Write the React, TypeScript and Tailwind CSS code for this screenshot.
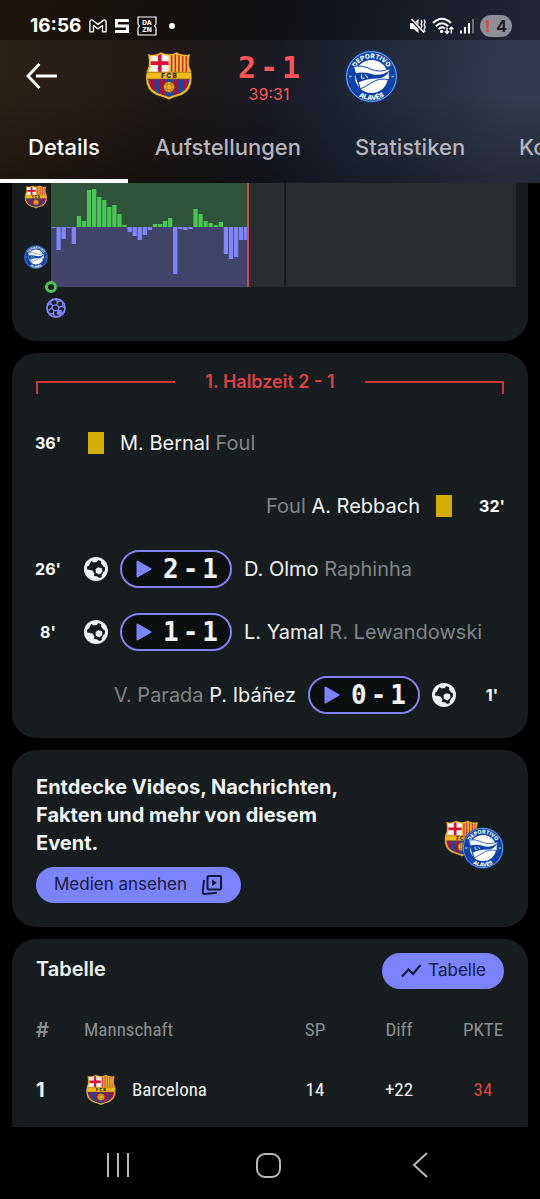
import { useId } from "react";

const momentum = [
  -1, -23, -12, -1, -17, 11, 6, 37, 38, 30, 27, 20, 22, 13, 2, -5, -9, -13, -8, -3,
  3, 3, 6, 9, -47, -2, -3, -2, 18, 13, 6, 4, 2, 5, -27, -32, -30, -13, -13,
];

const tabs = ["Details", "Aufstellungen", "Statistiken", "Kommentare"];

type MatchEvent = {
  minute: string;
  side: "home" | "away";
  player: string;
  detail: string;
  score?: [number, number];
};

const events: MatchEvent[] = [
  { minute: "36'", side: "home", player: "M. Bernal", detail: "Foul" },
  { minute: "32'", side: "away", player: "A. Rebbach", detail: "Foul" },
  { minute: "26'", side: "home", player: "D. Olmo", detail: "Raphinha", score: [2, 1] },
  { minute: "8'", side: "home", player: "L. Yamal", detail: "R. Lewandowski", score: [1, 1] },
  { minute: "1'", side: "away", player: "P. Ibáñez", detail: "V. Parada", score: [0, 1] },
];

function BarcaCrest({ className }: { className: string }) {
  const id = useId();
  const shape =
    "M8 8Q28 15 48 3Q72 15 95 3Q116 15 136 8Q131 30 133 46Q142 60 141 80Q141 118 110 133Q84 140 72 147Q59 140 34 133Q2 118 2 80Q2 60 10 46Q13 30 8 8Z";
  return (
    <svg className={className} viewBox="0 0 144 150" role="img" aria-label="Barcelona">
      <clipPath id={id}>
        <path d="M16 15Q32 18 49 9Q72 20 94 9Q112 18 128 15Q124 34 126 48Q135 62 134 80Q133 112 107 126Q82 133 72 139Q61 133 37 126Q10 112 9 80Q9 62 17 48Q20 34 16 15Z" />
      </clipPath>
      <path d={shape} fill="#f2b91b" stroke="#1d1a3a" strokeWidth="2" />
      <g clipPath={`url(#${id})`}>
        <path d="M0 0H71V62H0Z" fill="#fbf7f2" />
        <path d="M39 0H50V62H39ZM0 31H71V42H0Z" fill="#dc1038" />
        <path d="M74 0H144V62H74Z" fill="#f9cf33" />
        <path d="M80 0V62M91 0V62M102 0V62M113 0V62M124 0V62" stroke="#cf2238" strokeWidth="5" />
        <path d="M0 84H144V150H0Z" fill="#17489c" />
        <path d="M14 84H30V150H14ZM44 84H60V150H44ZM84 84H100V150H84ZM114 84H130V150H114Z" fill="#a5123f" />
      </g>
      <path d="M6 64H138M6 84H138" stroke="#8a5b10" strokeWidth="2" />
      <text x="72" y="81" textAnchor="middle" fontSize="19" fontWeight="800" fontFamily="Inter, sans-serif" fill="#1d1a16">
        F C B
      </text>
      <circle cx="72" cy="108" r="16" fill="#efb71e" stroke="#8a5b10" strokeWidth="2" />
      <path d="M60 102Q72 96 84 103M60 113Q72 120 84 112M68 93Q62 107 69 123M77 93Q83 108 77 123" stroke="#966411" strokeWidth="2" fill="none" />
    </svg>
  );
}

function AlavesCrest({ className }: { className: string }) {
  const id = useId();
  return (
    <svg className={className} viewBox="0 0 160 160" role="img" aria-label="Deportivo Alavés">
      <defs>
        <path id={`${id}t`} d="M25 80A55 55 0 0 1 135 80" />
        <path id={`${id}b`} d="M9 80A71 71 0 0 0 151 80" />
      </defs>
      <circle cx="80" cy="80" r="79" fill="#0d43a8" />
      <circle cx="80" cy="80" r="75" fill="none" stroke="#c9d8f4" strokeWidth="2" />
      <circle cx="80" cy="80" r="50" fill="#fff" />
      <g fill="#fff" fontSize="20" fontWeight="800" fontFamily="Inter, sans-serif" textAnchor="middle">
        <text>
          <textPath href={`#${id}t`} startOffset="50%">DEPORTIVO</textPath>
        </text>
        <text>
          <textPath href={`#${id}b`} startOffset="50%">ALAVÉS</textPath>
        </text>
      </g>
      <path d="M24 50Q50 44 78 58Q106 70 136 56Q132 72 134 90Q104 82 78 100Q62 110 46 118Z" fill="#fff" stroke="#0d43a8" strokeWidth="3" strokeLinejoin="round" />
      <path d="M31 70Q58 64 84 73Q110 80 136 60Q122 86 98 86Q66 86 40 98Z" fill="#0d43a8" />
      <path d="M25 48L47 124" stroke="#0d43a8" strokeWidth="3" />
      <path d="M50 74V85H59M61 74L69 85" stroke="#fff" strokeWidth="3" fill="none" />
      <path d="M12 80H20M140 80H148" stroke="#9db6e6" strokeWidth="5" />
    </svg>
  );
}

function GoalBall() {
  return (
    <svg className="size-6 shrink-0" viewBox="0 0 24 24" aria-hidden="true">
      <circle cx="12" cy="12" r="12" fill="#eef3f5" />
      <path
        d="M6.2 6L7.6 4L9.4 5.6L12.8 5L14.4 3L17.4 4.4L17 6.6L19.4 9.4L21 10.4L20.8 14L19.4 15L17.6 18.6L18 20L15 21L13.4 19.4L9.6 18.8L7.4 20.2L5.4 18.6L6.4 16.4L5 13.4L3 12.6L3.2 9.6L5 8.6Z"
        fill="#171c1e"
      />
      <path d="M2 12.6L5.2 12.8L8.6 13.4L10.4 16.4L9.6 19.8L6.4 21L3 17.6Z" fill="#eef3f5" />
      <path d="M14.2 10.2L18 11.2L18.4 14.8L15.4 17.4L11.8 15.8L11.6 12Z" fill="#eef3f5" />
    </svg>
  );
}

function TimelineBall() {
  return (
    <svg className="size-5" viewBox="0 0 24 24" aria-hidden="true">
      <circle cx="12" cy="12" r="10.8" fill="#171c1e" stroke="#8087ff" strokeWidth="2.2" />
      <path d="M8.3 9.2L12.6 8L15.8 11L14.2 15L9.6 15.2L7 12.2Z" fill="none" stroke="#8087ff" strokeWidth="1.6" />
      <path
        d="M8.3 9.2L5.5 6.8L6.3 3M5.5 6.8L1.6 9M12.6 8L14 4.6L10.8 1.6M14 4.6L18.6 3.4M15.8 11L19.8 9.8L22.4 12M19.8 9.8L20 5.6M7 12.2L3.2 14.8M9.6 15.2L8.5 19L4 18.6M8.5 19L11 22.4"
        fill="none"
        stroke="#8087ff"
        strokeWidth="1.6"
      />
      <path d="M13.8 14.8L18.3 14.2L20.4 17.5L16.5 21.2L12.6 19Z" fill="#8087ff" />
    </svg>
  );
}

function StatusBar() {
  return (
    <div className="flex h-10 items-center justify-between bg-black/35 pt-3 pr-7 pl-[30px]">
      <div className="flex items-center gap-2 text-white">
        <span className="text-[19px] leading-6 font-bold">16:56</span>
        <svg className="h-4 w-[18px]" viewBox="0 0 20 16" fill="none" stroke="#fff" strokeWidth="1.5" aria-hidden="true">
          <path d="M1 14.5V3.5Q1 1 3.6 1.3L10 6.2L16.4 1.3Q19 1 19 3.5V14.5H15V7.5L10 11.2L5 7.5V14.5Z" strokeLinejoin="round" />
        </svg>
        <svg className="h-4 w-[14px]" viewBox="0 0 14 16" fill="none" stroke="#fff" strokeWidth="3" aria-hidden="true">
          <path d="M14 2.5H1.5V8H12.5V13.5H0" />
        </svg>
        <svg className="size-5" viewBox="0 0 20 20" aria-hidden="true">
          <path d="M1 1H19V8L17.6 10L19 12V19H1V12L2.4 10L1 8Z" fill="none" stroke="#fff" strokeWidth="1.2" />
          <g fill="#fff" fontSize="6.5" fontWeight="800" textAnchor="middle">
            <text x="10" y="8.8">DA</text>
            <text x="10" y="16">ZN</text>
          </g>
        </svg>
        <span className="ml-1 size-1.5 rounded-full bg-white" />
      </div>
      <div className="flex items-center gap-1.5">
        <svg className="size-4" viewBox="0 0 16 16" aria-hidden="true">
          <path d="M0 5H3.5L8.5 1V15L3.5 11H0Z" fill="#fff" />
          <path d="M1 1L14 15" stroke="#14161c" strokeWidth="3" />
          <path d="M1.5 1L14 14.5" stroke="#fff" strokeWidth="1.6" />
          <path d="M11 2L12 4L11 6L12 8L11 10M14 1.5L15.2 4L14 6.5L15.2 9L14 11.5L15.2 14" stroke="#fff" strokeWidth="1.3" fill="none" />
        </svg>
        <svg className="h-[18px] w-[22px]" viewBox="0 0 22 18" fill="none" stroke="#fff" strokeWidth="1.9" aria-hidden="true">
          <path d="M1 6Q10 -2.5 19 6M3.8 9.2Q10 3.3 16.2 9.2M6.6 12Q10 8.6 13 11.5" />
          <circle cx="9.6" cy="14.4" r="1.6" fill="#fff" stroke="none" />
          <path d="M15 10.5V16M13 14.2L15 16.4L17 14.2M19.3 16.5V10.5M17.4 12.3L19.3 10.2L21.4 12.3" strokeWidth="1.4" />
        </svg>
        <svg className="h-4 w-[14px]" viewBox="0 0 14 16" strokeWidth="2" aria-hidden="true">
          <path d="M1 12.5V15.5M5 9V15.5M9 5V15.5" stroke="#fff" />
          <path d="M13 1V15.5" stroke="#6c6f78" />
        </svg>
        <span className="flex h-[22px] w-8 items-center justify-center gap-1.5 rounded-full bg-[#8d8f96] text-base leading-5 font-bold text-[#1c1e24]">
          <span className="text-[#ef3b3b]">!</span>4
        </span>
      </div>
    </div>
  );
}

function Header() {
  return (
    <header className="bg-[linear-gradient(to_bottom,transparent_50%,rgba(0,0,0,0.3)_100%),linear-gradient(100deg,#2f2215_0%,#1f1815_33%,#181a23_50%,#1f273a_66%,#343a50_92%)]">
      <StatusBar />
      <div className="flex h-[72px] items-center justify-between pr-[142px] pl-[26px]">
        <button type="button" aria-label="Zurück" className="text-white">
          <svg className="h-7 w-8" viewBox="0 0 32 28" fill="none" stroke="currentColor" strokeWidth="3" aria-hidden="true">
            <path d="M31 14H10M13.5 2L2 14L13.5 26" />
          </svg>
        </button>
        <div className="flex items-center gap-11">
          <BarcaCrest className="h-[50px] w-12 shrink-0" />
          <div className="flex w-16 flex-col items-center pt-[3px] text-[#fb5558]">
            <div className="flex gap-1 font-['DejaVu_Sans_Mono',monospace] text-[30px] leading-8 font-bold">
              <span>2</span>
              <span>-</span>
              <span>1</span>
            </div>
            <span className="text-base leading-5">39:31</span>
          </div>
          <AlavesCrest className="size-[53px] shrink-0" />
        </div>
      </div>
      <nav className="flex h-[71px] overflow-hidden">
        {tabs.map((tab, i) => (
          <a
            key={tab}
            href={`#${tab.toLowerCase()}`}
            className={
              i === 0
                ? "flex shrink-0 items-center border-b-4 border-white px-7 pt-1 text-[22px] font-medium text-white"
                : "flex shrink-0 items-center border-b-4 border-transparent px-[27px] pt-1 text-[22px] font-medium text-[#b5b5bb]"
            }
          >
            {tab}
          </a>
        ))}
      </nav>
    </header>
  );
}

function MomentumCard() {
  return (
    <section className="rounded-b-3xl bg-[#171c1e] pr-3 pb-[23px]">
      <div className="flex">
        <div className="mr-[3px] ml-3 flex flex-col gap-9 pt-0.5">
          <BarcaCrest className="size-6" />
          <AlavesCrest className="size-6" />
        </div>
        <svg className="h-[104px] min-w-0 flex-1" viewBox="0 0 465 104" preserveAspectRatio="none" aria-label="Spielverlauf">
          <rect width="465" height="104" fill="#282d2f" />
          <rect width="197" height="44" fill="#30543a" />
          <rect y="44" width="197" height="60" fill="#414368" />
          {momentum.map((value, i) => (
            <rect
              key={i}
              x={i * 5.07 + 0.4}
              y={value > 0 ? 44 - value : 44}
              width="4.3"
              height={Math.abs(value)}
              fill={value > 0 ? "#4ac455" : "#7f86fb"}
            />
          ))}
          <rect x="196" width="2" height="104" fill="#cf4a4d" />
          <rect x="233" width="2" height="104" fill="#171c1e" />
        </svg>
      </div>
      <div className="relative pt-[11px] pl-[34px]">
        <span className="absolute -top-1.5 left-[33px] size-3 rounded-full border-[3px] border-[#4ac455] bg-[#171c1e]" />
        <TimelineBall />
      </div>
    </section>
  );
}

function ScoreButton({ score }: { score: [number, number] }) {
  return (
    <button
      type="button"
      className="flex h-[38px] w-28 shrink-0 items-center justify-between rounded-full border-2 border-[#847ff2] bg-[#0a0e0f] pr-3 pl-3.5 text-[#f1f3f3]"
    >
      <svg className="h-[18px] w-4" viewBox="0 0 16 18" aria-hidden="true">
        <path d="M1.5 1.5L14.5 9L1.5 16.5Z" fill="#7b83ff" stroke="#7b83ff" strokeWidth="2" strokeLinejoin="round" />
      </svg>
      <span className="flex gap-1 font-['DejaVu_Sans_Mono',monospace] text-[26px] leading-8 font-bold">
        <span>{score[0]}</span>
        <span>-</span>
        <span>{score[1]}</span>
      </span>
    </button>
  );
}

function EventRow({ event }: { event: MatchEvent }) {
  const away = event.side === "away";
  return (
    <li className={away ? "flex h-[63px] flex-row-reverse items-center gap-3" : "flex h-[63px] items-center gap-3"}>
      <span
        className={
          away
            ? "ml-3 flex w-6 shrink-0 justify-center text-base font-bold"
            : "mr-3 flex w-6 shrink-0 justify-center text-base font-bold"
        }
      >
        {event.minute}
      </span>
      <span className="flex w-6 shrink-0 justify-center">
        {event.score ? <GoalBall /> : <span className="h-[22px] w-4 bg-[#d5ac00]" />}
      </span>
      {event.score && <ScoreButton score={event.score} />}
      <span className="text-xl whitespace-nowrap text-[#f1f3f3]">
        {away && <span className="text-[#808486]">{event.detail} </span>}
        {event.player}
        {!away && <span className="text-[#808486]"> {event.detail}</span>}
      </span>
    </li>
  );
}

function EventsCard() {
  return (
    <section className="rounded-3xl bg-[#171c1e] px-6 pt-[17px] pb-3">
      <div className="mb-[17px] flex h-6 items-end gap-[30px]">
        <span className="h-[13px] flex-1 border-t-2 border-l-2 border-[#c6383c]" />
        <h2 className="self-center text-[18px] leading-6 font-semibold text-[#dd4145]">1. Halbzeit 2 - 1</h2>
        <span className="h-[13px] flex-1 border-t-2 border-r-2 border-[#c6383c]" />
      </div>
      <ul>
        {events.map((event) => (
          <EventRow key={event.minute} event={event} />
        ))}
      </ul>
    </section>
  );
}

function MediaCard() {
  return (
    <section className="flex items-center justify-between rounded-3xl bg-[#171c1e] px-6 pt-[23px] pb-6">
      <div className="max-w-[330px]">
        <h2 className="text-xl leading-7 font-bold text-[#eef3f5]">
          Entdecke Videos, Nachrichten, Fakten und mehr von diesem Event.
        </h2>
        <button
          type="button"
          className="mt-2.5 flex h-9 items-center gap-3.5 rounded-full bg-[#7b83ff] px-[18px] text-[17px] text-[#121a3c]"
        >
          Medien ansehen
          <svg className="size-[22px]" viewBox="0 0 22 22" fill="none" stroke="currentColor" strokeWidth="2" aria-hidden="true">
            <rect x="6.5" y="2" width="13.5" height="13.5" rx="1" />
            <path d="M3 6L1.8 18Q1.8 20 3.6 20L16 18.8" />
            <path d="M11 5.5L16 8.8L11 12Z" fill="currentColor" stroke="none" />
          </svg>
        </button>
      </div>
      <div className="relative mt-3 h-[50px] w-[60px] shrink-0">
        <BarcaCrest className="h-[39px] w-9" />
        <AlavesCrest className="absolute right-0 bottom-0 size-[42px]" />
      </div>
    </section>
  );
}

function TableCard() {
  return (
    <section className="rounded-t-3xl bg-[#171c1e] px-6 pt-3.5 pb-[7px]">
      <div className="flex items-start justify-between">
        <h2 className="pt-0.5 text-xl leading-7 font-semibold text-[#eef3f5]">Tabelle</h2>
        <button
          type="button"
          className="flex h-9 items-center gap-1.5 rounded-full bg-[#7b83ff] px-[18px] text-[17px] text-[#121a3c]"
        >
          <svg className="h-4 w-[22px]" viewBox="0 0 22 16" fill="none" stroke="currentColor" strokeWidth="2" aria-hidden="true">
            <path d="M2 13.5L8.5 6.5L13 11L20.5 2" />
          </svg>
          Tabelle
        </button>
      </div>
      <table className="mt-[11px] w-full table-fixed font-['Roboto_Condensed',Roboto,sans-serif] text-[19px] text-[#f1f3f3]">
        <thead>
          <tr className="h-[60px] text-[#8a8e90]">
            <th className="w-12 text-left font-[Inter] text-xl font-semibold">#</th>
            <th className="text-left font-normal">Mannschaft</th>
            <th className="w-[84px] font-normal">SP</th>
            <th className="w-[84px] font-normal">Diff</th>
            <th className="w-[63px] pl-[21px] font-normal">PKTE</th>
          </tr>
        </thead>
        <tbody>
          <tr className="h-[60px] text-center">
            <td className="text-left font-[Inter] text-xl font-bold">1</td>
            <td>
              <div className="flex items-center gap-3.5">
                <BarcaCrest className="h-8 w-[34px]" />
                Barcelona
              </div>
            </td>
            <td>14</td>
            <td>+22</td>
            <td className="pl-[21px] text-[#dd4145]">34</td>
          </tr>
        </tbody>
      </table>
    </section>
  );
}

function SystemNav() {
  return (
    <nav className="flex h-[72px] items-center bg-black pr-[45px] pl-[42px] pt-1 text-[#b9b9b9]">
      <button type="button" aria-label="Letzte Apps" className="flex flex-1 justify-center">
        <svg className="h-6 w-[22px]" viewBox="0 0 22 24" stroke="currentColor" strokeWidth="2" aria-hidden="true">
          <path d="M1 0V24M11 0V24M21 0V24" />
        </svg>
      </button>
      <button type="button" aria-label="Startseite" className="flex flex-1 justify-center">
        <span className="size-[25px] rounded-[9px] border-2 border-current" />
      </button>
      <button type="button" aria-label="Zurück" className="flex flex-1 justify-center">
        <svg className="h-[26px] w-4" viewBox="0 0 16 26" fill="none" stroke="currentColor" strokeWidth="2" aria-hidden="true">
          <path d="M15 1L2 13L15 25" />
        </svg>
      </button>
    </nav>
  );
}

export default function App() {
  return (
    <div className="min-h-screen bg-black font-[Inter,sans-serif] text-white">
      <Header />
      <main className="flex flex-col gap-3 px-3">
        <MomentumCard />
        <EventsCard />
        <MediaCard />
        <TableCard />
      </main>
      <SystemNav />
    </div>
  );
}
